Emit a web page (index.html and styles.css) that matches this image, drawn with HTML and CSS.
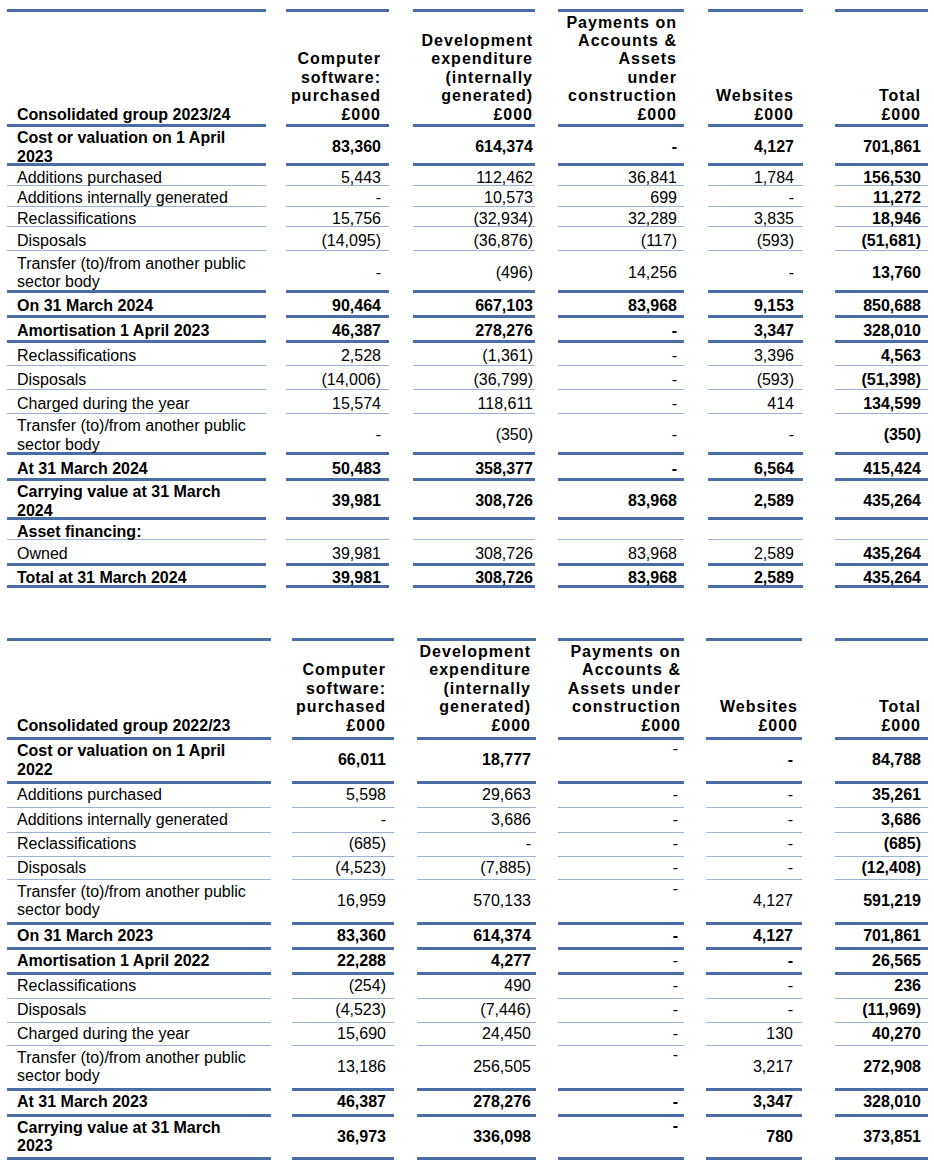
FILE: index.html
```html
<!DOCTYPE html>
<html lang="en">
<head>
<meta charset="utf-8">
<title>Intangible assets</title>
<link rel="stylesheet" href="styles.css">
</head>
<body>
<main class="page">

  <section class="tbl t1">
    <div class="row head">
      <div class="c lab">Consolidated group 2023/24</div>
      <div class="c">Computer software: purchased £000</div>
      <div class="c">Development expenditure (internally generated) £000</div>
      <div class="c">Payments on Accounts &amp; Assets under construction £000</div>
      <div class="c">Websites £000</div>
      <div class="c">Total £000</div>
    </div>
    <div class="row thick bold">
      <div class="c lab">Cost or valuation on 1 April 2023</div>
      <div class="c">83,360</div><div class="c">614,374</div><div class="c">-</div><div class="c">4,127</div><div class="c">701,861</div>
    </div>
    <div class="row thin">
      <div class="c lab">Additions purchased</div>
      <div class="c">5,443</div><div class="c">112,462</div><div class="c">36,841</div><div class="c">1,784</div><div class="c">156,530</div>
    </div>
    <div class="row thin">
      <div class="c lab">Additions internally generated</div>
      <div class="c">-</div><div class="c">10,573</div><div class="c">699</div><div class="c">-</div><div class="c">11,272</div>
    </div>
    <div class="row thin">
      <div class="c lab">Reclassifications</div>
      <div class="c">15,756</div><div class="c">(32,934)</div><div class="c">32,289</div><div class="c">3,835</div><div class="c">18,946</div>
    </div>
    <div class="row thin">
      <div class="c lab">Disposals</div>
      <div class="c">(14,095)</div><div class="c">(36,876)</div><div class="c">(117)</div><div class="c">(593)</div><div class="c">(51,681)</div>
    </div>
    <div class="row thick">
      <div class="c lab">Transfer (to)/from another public sector body</div>
      <div class="c">-</div><div class="c">(496)</div><div class="c">14,256</div><div class="c">-</div><div class="c">13,760</div>
    </div>
    <div class="row thick bold">
      <div class="c lab">On 31 March 2024</div>
      <div class="c">90,464</div><div class="c">667,103</div><div class="c">83,968</div><div class="c">9,153</div><div class="c">850,688</div>
    </div>
    <div class="row thick bold">
      <div class="c lab">Amortisation 1 April 2023</div>
      <div class="c">46,387</div><div class="c">278,276</div><div class="c">-</div><div class="c">3,347</div><div class="c">328,010</div>
    </div>
    <div class="row thin">
      <div class="c lab">Reclassifications</div>
      <div class="c">2,528</div><div class="c">(1,361)</div><div class="c">-</div><div class="c">3,396</div><div class="c">4,563</div>
    </div>
    <div class="row thin">
      <div class="c lab">Disposals</div>
      <div class="c">(14,006)</div><div class="c">(36,799)</div><div class="c">-</div><div class="c">(593)</div><div class="c">(51,398)</div>
    </div>
    <div class="row thin">
      <div class="c lab">Charged during the year</div>
      <div class="c">15,574</div><div class="c">118,611</div><div class="c">-</div><div class="c">414</div><div class="c">134,599</div>
    </div>
    <div class="row thick">
      <div class="c lab">Transfer (to)/from another public sector body</div>
      <div class="c">-</div><div class="c">(350)</div><div class="c">-</div><div class="c">-</div><div class="c">(350)</div>
    </div>
    <div class="row thick bold">
      <div class="c lab">At 31 March 2024</div>
      <div class="c">50,483</div><div class="c">358,377</div><div class="c">-</div><div class="c">6,564</div><div class="c">415,424</div>
    </div>
    <div class="row thick bold">
      <div class="c lab">Carrying value at 31 March 2024</div>
      <div class="c">39,981</div><div class="c">308,726</div><div class="c">83,968</div><div class="c">2,589</div><div class="c">435,264</div>
    </div>
    <div class="row thin bold">
      <div class="c lab">Asset financing:</div>
      <div class="c"></div><div class="c"></div><div class="c"></div><div class="c"></div><div class="c"></div>
    </div>
    <div class="row thick">
      <div class="c lab">Owned</div>
      <div class="c">39,981</div><div class="c">308,726</div><div class="c">83,968</div><div class="c">2,589</div><div class="c">435,264</div>
    </div>
    <div class="row thick bold">
      <div class="c lab">Total at 31 March 2024</div>
      <div class="c">39,981</div><div class="c">308,726</div><div class="c">83,968</div><div class="c">2,589</div><div class="c">435,264</div>
    </div>
  </section>

  <section class="tbl t2">
    <div class="row head">
      <div class="c lab">Consolidated group 2022/23</div>
      <div class="c">Computer software: purchased £000</div>
      <div class="c">Development expenditure (internally generated) £000</div>
      <div class="c">Payments on Accounts &amp; Assets under construction £000</div>
      <div class="c">Websites £000</div>
      <div class="c">Total £000</div>
    </div>
    <div class="row thick bold">
      <div class="c lab">Cost or valuation on 1 April 2022</div>
      <div class="c">66,011</div><div class="c">18,777</div><div class="c top reg">-</div><div class="c">-</div><div class="c">84,788</div>
    </div>
    <div class="row thin">
      <div class="c lab">Additions purchased</div>
      <div class="c">5,598</div><div class="c">29,663</div><div class="c">-</div><div class="c">-</div><div class="c">35,261</div>
    </div>
    <div class="row thin">
      <div class="c lab">Additions internally generated</div>
      <div class="c">-</div><div class="c">3,686</div><div class="c">-</div><div class="c">-</div><div class="c">3,686</div>
    </div>
    <div class="row thin">
      <div class="c lab">Reclassifications</div>
      <div class="c">(685)</div><div class="c">-</div><div class="c">-</div><div class="c">-</div><div class="c">(685)</div>
    </div>
    <div class="row thin">
      <div class="c lab">Disposals</div>
      <div class="c">(4,523)</div><div class="c">(7,885)</div><div class="c">-</div><div class="c">-</div><div class="c">(12,408)</div>
    </div>
    <div class="row thick">
      <div class="c lab">Transfer (to)/from another public sector body</div>
      <div class="c">16,959</div><div class="c">570,133</div><div class="c top">-</div><div class="c">4,127</div><div class="c">591,219</div>
    </div>
    <div class="row thick bold">
      <div class="c lab">On 31 March 2023</div>
      <div class="c">83,360</div><div class="c">614,374</div><div class="c">-</div><div class="c">4,127</div><div class="c">701,861</div>
    </div>
    <div class="row thick bold">
      <div class="c lab">Amortisation 1 April 2022</div>
      <div class="c">22,288</div><div class="c">4,277</div><div class="c reg">-</div><div class="c">-</div><div class="c">26,565</div>
    </div>
    <div class="row thin">
      <div class="c lab">Reclassifications</div>
      <div class="c">(254)</div><div class="c">490</div><div class="c">-</div><div class="c">-</div><div class="c">236</div>
    </div>
    <div class="row thin">
      <div class="c lab">Disposals</div>
      <div class="c">(4,523)</div><div class="c">(7,446)</div><div class="c">-</div><div class="c">-</div><div class="c">(11,969)</div>
    </div>
    <div class="row thin">
      <div class="c lab">Charged during the year</div>
      <div class="c">15,690</div><div class="c">24,450</div><div class="c">-</div><div class="c">130</div><div class="c">40,270</div>
    </div>
    <div class="row thick">
      <div class="c lab">Transfer (to)/from another public sector body</div>
      <div class="c">13,186</div><div class="c">256,505</div><div class="c top">-</div><div class="c">3,217</div><div class="c">272,908</div>
    </div>
    <div class="row thick bold">
      <div class="c lab">At 31 March 2023</div>
      <div class="c">46,387</div><div class="c">278,276</div><div class="c">-</div><div class="c">3,347</div><div class="c">328,010</div>
    </div>
    <div class="row thick bold">
      <div class="c lab">Carrying value at 31 March 2023</div>
      <div class="c">36,973</div><div class="c">336,098</div><div class="c top">-</div><div class="c">780</div><div class="c">373,851</div>
    </div>
  </section>

</main>
</body>
</html>
```

FILE: styles.css
```css
:root {
  --thick: #4a6da7;
  --thin: #9cb1d6;
}

* { box-sizing: border-box; }

html, body {
  margin: 0;
  background: #ffffff;
}

body {
  font-family: "Liberation Sans", Arial, sans-serif;
  font-size: 16px;
  line-height: 18.4px;
  color: #000000;
}

.page {
  padding: 9px 0 0 7px;
}

.tbl {
  display: grid;
}

.t1 {
  grid-template-columns: 259px 20px 103px 24px 122px 23px 126px 24px 95px 32px 93px;
  grid-template-rows: 118px 39px 20px 21px 20px 24px 42px 25px 25px 23px 24px 24px 41px 26px 39px 20px 26px 22px;
}

.t2 {
  margin-top: 50px;
  grid-template-columns: 264px 21px 102px 23px 119px 22px 126px 22px 96px 33px 93px;
  grid-template-rows: 102px 44px 24px 25px 24px 23px 45px 25px 25px 24px 24px 23px 45px 26px 43px;
}

.row { display: contents; }

.c {
  display: flex;
  align-items: center;
  justify-content: flex-end;
  text-align: right;
  white-space: normal;
}

.c:nth-child(2) { grid-column: 3; }
.c:nth-child(3) { grid-column: 5; }
.c:nth-child(4) { grid-column: 7; }
.c:nth-child(5) { grid-column: 9; }
.c:nth-child(6) { grid-column: 11; font-weight: bold; }

.c.lab {
  grid-column: 1;
  justify-content: flex-start;
  text-align: left;
  padding-left: 10px;
  padding-right: 14px;
}

.t2 .c.lab { padding-right: 16px; }

/* column paddings */
.t1 .c:nth-child(2) { padding: 0 8px 0 2px; }
.t1 .c:nth-child(3) { padding: 0 2px 0 2px; }
.t1 .c:nth-child(4) { padding: 0 7px 0 7px; }
.t1 .c:nth-child(5) { padding: 0 9px 0 2px; }
.t1 .c:nth-child(6) { padding: 0 7px 0 2px; }

.t2 .c:nth-child(2) { padding: 0 8px 0 2px; }
.t2 .c:nth-child(3) { padding: 0 5px 0 1px; }
.t2 .c:nth-child(4) { padding: 0 6px 0 4px; }
.t2 .c:nth-child(5) { padding: 0 9px 0 2px; }
.t2 .c:nth-child(6) { padding: 0 7px 0 2px; }

/* body rows of the first table sit slightly lower in their cells */
.t1 .row:not(.head) > .c { padding-top: 5px; }

/* header row */
.head > .c {
  align-items: flex-end;
  font-weight: bold;
  letter-spacing: 1px;
  border-top: 3px solid var(--thick);
  border-bottom: 3px solid var(--thick);
}

.head > .c.lab { letter-spacing: 0; }

.t2 .head > .c { padding-bottom: 2px; }
.t2 .head > .c:nth-child(4) { padding-right: 3px; padding-left: 6px; }
.t2 .head > .c:nth-child(5) { padding-right: 4px; }

/* rules */
.row.thick > .c { border-bottom: 3px solid var(--thick); }
.row.thin > .c { border-bottom: 1px solid var(--thin); }

.row.bold > .c { font-weight: bold; }
.row > .c.reg { font-weight: normal; }

.c.top { align-items: flex-start; padding-top: 1px; }
```
